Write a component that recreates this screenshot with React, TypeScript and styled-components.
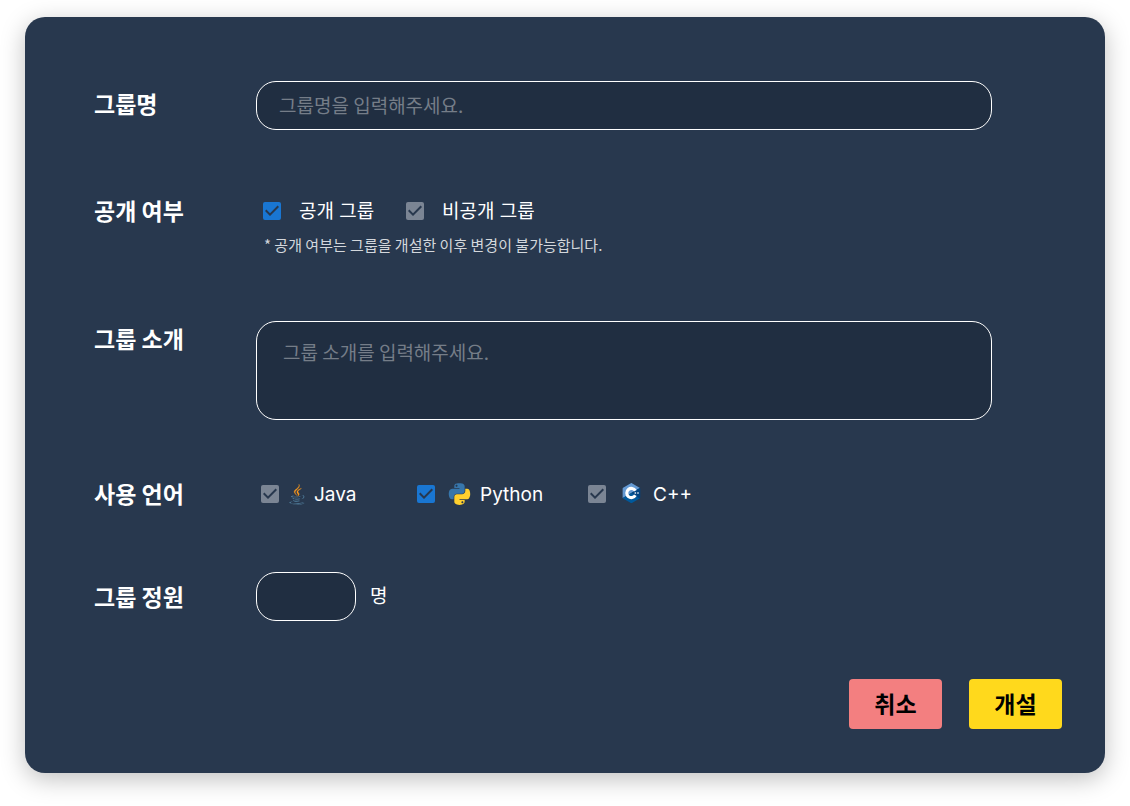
import React from "react";
import styled, { createGlobalStyle } from "styled-components";

const GlobalStyle = createGlobalStyle`
  *, *::before, *::after { box-sizing: border-box; }
  body {
    margin: 0;
    background: #fff;
    font-family: Inter, "Noto Sans CJK KR", sans-serif;
  }
`;

const korean = `"Noto Sans CJK KR", sans-serif`;

const Page = styled.main`
  padding: 17px 25px 33px;
`;

const Card = styled.form`
  padding: 64px 43px 44px 69px;
  border-radius: 20px;
  background: #28384e;
  color: #fff;
  box-shadow: 0 6px 24px rgba(0, 0, 0, 0.25);
`;

const Row = styled.div<{ $gap?: number }>`
  display: grid;
  grid-template-columns: 162px minmax(0, 1fr);
  margin-top: ${({ $gap = 0 }) => $gap}px;
  padding-right: 70px;
`;

const Title = styled.label<{ $line: number }>`
  font: 700 23px/${({ $line }) => $line}px ${korean};
`;

const fieldStyle = `
  border: 1px solid #fff;
  border-radius: 20px;
  background: #202e41;
  color: #fff;
  outline: none;
  &::placeholder { color: #757d88; opacity: 1; }
`;

const TextField = styled.input<{ $short?: boolean }>`
  width: ${({ $short }) => ($short ? "100px" : "100%")};
  height: 49px;
  padding: 0 22px 2px;
  font: 400 19px/28px ${korean};
  ${fieldStyle}
`;

const TextArea = styled.textarea`
  display: block;
  width: 100%;
  height: 99px;
  padding: 16px 26px;
  resize: none;
  font: 400 19px/28px ${korean};
  ${fieldStyle}
`;

const Options = styled.div<{ $indent: number }>`
  display: flex;
  align-items: center;
  height: 34px;
  padding-left: ${({ $indent }) => $indent}px;
`;

const Option = styled.label<{ $gap: number; $width?: number }>`
  display: flex;
  align-items: center;
  gap: ${({ $gap }) => $gap}px;
  width: ${({ $width }) => ($width ? `${$width}px` : "auto")};
  font-size: 19px;
  line-height: 28px;
`;

const OptionText = styled.span`
  padding-top: 2px;
`;

const CheckBox = styled.span`
  display: grid;
  width: 18px;
  height: 18px;
  > * { grid-area: 1 / 1; }
`;

const CheckInput = styled.input`
  appearance: none;
  width: 18px;
  height: 18px;
  margin: 0;
  border-radius: 2px;
  background: #7b8594;
  &:checked { background: #1976d2; }
`;

const Tick = styled.svg`
  width: 18px;
  height: 18px;
  pointer-events: none;
`;

const Note = styled.p`
  margin: 6px 0 0;
  padding-left: 8px;
  color: #d3d7dc;
  font: 400 15px/22px ${korean};
`;

const Capacity = styled.div`
  display: flex;
  align-items: center;
  gap: 14px;
  font: 400 19px/28px ${korean};
`;

const Unit = styled.span`
  padding-bottom: 4px;
`;

const Actions = styled.div`
  display: flex;
  justify-content: flex-end;
  gap: 27px;
  margin-top: 58px;
`;

const Button = styled.button<{ $color: string }>`
  width: 93px;
  height: 50px;
  padding: 0 0 2px;
  border: 0;
  border-radius: 4px;
  background: ${({ $color }) => $color};
  color: #000;
  font: 700 23px/34px ${korean};
`;

function Check({ id, checked }: { id: string; checked?: boolean }) {
  return (
    <CheckBox>
      <CheckInput type="checkbox" id={id} defaultChecked={checked} />
      <Tick viewBox="3 3 18 18" aria-hidden="true">
        <path fill="#28384e" d="M10 17l-5-5 1.41-1.41L10 14.17l7.59-7.59L19 8l-9 9z" />
      </Tick>
    </CheckBox>
  );
}

const JavaLogo = () => (
  <svg width="17" height="21" viewBox="12 0 100 128" aria-hidden="true">
    <g fill="#5382a1">
      <path d="M47.617 98.12s-4.767 2.774 3.397 3.71c9.892 1.13 14.947.968 25.845-1.092 0 0 2.871 1.795 6.873 3.351-24.439 10.47-55.308-.607-36.115-5.969zm-2.988-13.665s-5.348 3.959 2.823 4.805c10.567 1.091 18.91 1.18 33.354-1.6 0 0 1.993 2.025 5.132 3.131-29.542 8.64-62.446.68-41.309-6.336z" />
      <path d="M102.123 108.229s3.529 2.91-3.888 5.159c-14.102 4.272-58.706 5.56-71.094.171-4.451-1.938 3.899-4.625 6.526-5.192 2.739-.593 4.303-.485 4.303-.485-4.953-3.487-32.013 6.85-13.743 9.815 49.821 8.076 90.817-3.637 77.896-9.468zM49.912 70.294s-22.686 5.389-8.033 7.348c6.188.828 18.518.638 30.011-.326 9.39-.789 18.813-2.474 18.813-2.474s-3.308 1.419-5.704 3.053c-23.042 6.061-67.544 3.238-54.731-2.958 10.832-5.239 19.644-4.643 19.644-4.643zm40.697 22.747c23.421-12.167 12.591-23.86 5.032-22.285-1.848.385-2.677.72-2.677.72s.688-1.079 2-1.543c14.953-5.255 26.451 15.503-4.823 23.725 0-.002.359-.327.468-.617z" />
      <path d="M52.214 126.021c22.476 1.437 57-.8 57.817-11.436 0 0-1.571 4.032-18.577 7.231-19.186 3.612-42.854 3.191-56.887.874 0 .001 2.875 2.381 17.647 3.331z" />
    </g>
    <g fill="#f8981d" stroke="#f8981d" strokeWidth="2">
      <path d="M69.802 61.271c6.025 6.935-1.58 13.17-1.58 13.17s15.289-7.891 8.269-17.777c-6.559-9.215-11.587-13.792 15.635-29.58 0 .001-42.731 10.67-22.324 34.187z" />
      <path d="M76.491 1.587S89.459 14.563 64.188 34.51c-20.266 16.006-4.621 25.13-.007 35.559-11.831-10.673-20.509-20.07-14.688-28.815C58.041 28.42 81.722 22.195 76.491 1.587z" />
    </g>
  </svg>
);

const PythonLogo = () => (
  <svg width="27" height="22" viewBox="-7 1 123 105" aria-hidden="true">
    <path fill="#3776ab" d="M63.391 1.988c-4.222.02-8.252.379-11.8 1.007-10.45 1.846-12.346 5.71-12.346 12.837v9.411h24.693v3.137H29.977c-7.176 0-13.46 4.313-15.426 12.521-2.268 9.405-2.368 15.275 0 25.096 1.755 7.311 5.947 12.519 13.124 12.519h8.491V67.234c0-8.151 7.051-15.34 15.426-15.34h24.665c6.866 0 12.346-5.654 12.346-12.548V15.833c0-6.693-5.646-11.72-12.346-12.837-4.244-.706-8.645-1.027-12.866-1.008zM50.037 9.557c2.55 0 4.634 2.117 4.634 4.721 0 2.593-2.083 4.69-4.634 4.69-2.56 0-4.633-2.097-4.633-4.69-.001-2.604 2.073-4.721 4.633-4.721z" />
    <path fill="#ffd02e" d="M91.682 28.38v10.966c0 8.5-7.208 15.655-15.426 15.655H51.591c-6.756 0-12.346 5.783-12.346 12.549v23.515c0 6.691 5.818 10.628 12.346 12.547 7.816 2.297 15.312 2.713 24.665 0 6.216-1.801 12.346-5.423 12.346-12.547v-9.412H63.938v-3.138h37.012c7.176 0 9.852-5.005 12.348-12.519 2.578-7.735 2.467-15.174 0-25.096-1.774-7.145-5.161-12.521-12.348-12.521h-9.268zM77.809 87.927c2.561 0 4.634 2.097 4.634 4.692 0 2.602-2.074 4.719-4.634 4.719-2.55 0-4.633-2.117-4.633-4.719 0-2.595 2.083-4.692 4.633-4.692z" />
  </svg>
);

const CppLogo = () => (
  <svg width="23" height="22" viewBox="-13 2 131 136" aria-hidden="true">
    <path fill="#659ad3" d="M117.1 33.3c-.6-1.1-1.5-2.1-2.4-2.6L67.1 2.9c-1.6-1-4.6-1-6.2 0l-48 27.9c-1.7 1-2.9 3.5-2.9 5.4v55.7c0 1.1.2 2.3.9 3.4z" />
    <path fill="#00599c" d="M10.9 95.3c.5.8 1.2 1.5 1.9 1.9l48.2 27.9c1.6 1 4.6 1 6.2 0l48-27.9c1.7-1 2.9-3.5 2.9-5.4V36.1c0-.9-.1-1.9-1-2.8L64 64z" />
    <path fill="#004482" d="M115.2 97.2c1.7-1 2.9-3.5 2.9-5.4V36.1c0-.9-.1-1.9-1-2.8L64 64z" />
    <path fill="none" stroke="#fff" strokeWidth="19" d="M88.7 49.7a28.5 28.5 0 1 0 0 28.6" />
    <path fill="#fff" d="M82 62h4v-4h4v4h4v4h-4v4h-4v-4h-4zM99 62h4v-4h4v4h4v4h-4v4h-4v-4h-4z" />
  </svg>
);

export default function App() {
  return (
    <>
      <GlobalStyle />
      <Page>
        <Card onSubmit={(e: React.FormEvent) => e.preventDefault()}>
          <Row>
            <Title htmlFor="name" $line={45}>그룹명</Title>
            <TextField id="name" placeholder="그룹명을 입력해주세요." />
          </Row>

          <Row $gap={64}>
            <Title as="span" $line={32}>공개 여부</Title>
            <div>
              <Options $indent={7}>
                <Option $gap={18} $width={143}>
                  <Check id="public" checked />
                  <OptionText>공개 그룹</OptionText>
                </Option>
                <Option $gap={18}>
                  <Check id="private" />
                  <OptionText>비공개 그룹</OptionText>
                </Option>
              </Options>
              <Note>* 공개 여부는 그룹을 개설한 이후 변경이 불가능합니다.</Note>
            </div>
          </Row>

          <Row $gap={65}>
            <Title htmlFor="intro" $line={34}>그룹 소개</Title>
            <TextArea id="intro" placeholder="그룹 소개를 입력해주세요." />
          </Row>

          <Row $gap={57}>
            <Title as="span" $line={32}>사용 언어</Title>
            <Options $indent={5}>
              <Option $gap={9} $width={156}>
                <Check id="java" />
                <JavaLogo />
                <OptionText>Java</OptionText>
              </Option>
              <Option $gap={9} $width={171}>
                <Check id="python" checked />
                <PythonLogo />
                <OptionText>Python</OptionText>
              </Option>
              <Option $gap={12}>
                <Check id="cpp" />
                <CppLogo />
                <OptionText>C++</OptionText>
              </Option>
            </Options>
          </Row>

          <Row $gap={61}>
            <Title htmlFor="capacity" $line={49}>그룹 정원</Title>
            <Capacity>
              <TextField id="capacity" inputMode="numeric" $short />
              <Unit>명</Unit>
            </Capacity>
          </Row>

          <Actions>
            <Button type="button" $color="#f37f80">취소</Button>
            <Button type="submit" $color="#ffd91c">개설</Button>
          </Actions>
        </Card>
      </Page>
    </>
  );
}
